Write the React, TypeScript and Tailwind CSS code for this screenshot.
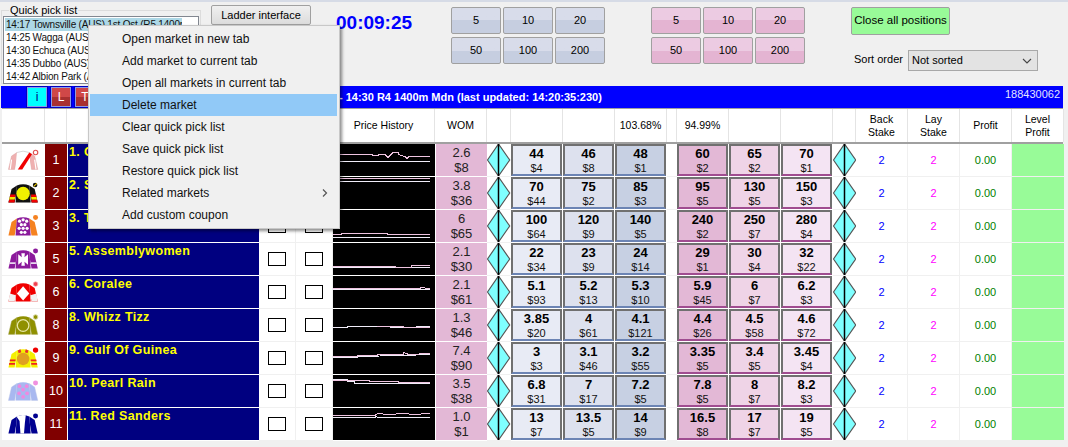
import { ReactNode } from 'react';

const FONT = "font-['Liberation_Sans',Arial,sans-serif]";

const GRID =
  'grid grid-cols-[43px_22px_192px_37px_37px_102px_52px_24px_52px_52px_52px_10px_52px_52px_52px_23px_52px_52px_52px_52px]';

type Price = [string, string];

interface Runner {
  no: number;
  name: string;
  wom: [string, string];
  back: Price[];
  lay: Price[];
  lines: [string, string];
}

const runners: Runner[] = [
  {
    no: 1,
    name: '1. Cosmic',
    wom: ['2.6', '$8'],
    back: [['44', '$4'], ['46', '$8'], ['48', '$1']],
    lay: [['60', '$2'], ['65', '$2'], ['70', '$1']],
    lines: ['7,10 39,10 39,11 45,11 45,10 52,10 55,13 60,8 65,8 65,10 72,12 74,14 76,12 97,12', '7,17 97,17'],
  },
  {
    no: 2,
    name: '2. Starlet',
    wom: ['3.8', '$36'],
    back: [['70', '$44'], ['75', '$2'], ['85', '$3']],
    lay: [['95', '$5'], ['130', '$5'], ['150', '$3']],
    lines: ['0,1 97,1', '0,4 97,4'],
  },
  {
    no: 3,
    name: '3. Tiara',
    wom: ['6', '$65'],
    back: [['100', '$64'], ['120', '$9'], ['140', '$5']],
    lay: [['240', '$2'], ['250', '$7'], ['280', '$4']],
    lines: ['0,24 8,24 8,23 54,23 54,24 97,24', '0,27 97,27'],
  },
  {
    no: 5,
    name: '5. Assemblywomen',
    wom: ['2.1', '$30'],
    back: [['22', '$34'], ['23', '$9'], ['24', '$14']],
    lay: [['29', '$1'], ['30', '$4'], ['32', '$22']],
    lines: ['0,23 62,23 62,24 78,24 78,22 97,22', '0,24 97,24'],
  },
  {
    no: 6,
    name: '6. Coralee',
    wom: ['2.1', '$61'],
    back: [['5.1', '$93'], ['5.2', '$13'], ['5.3', '$10']],
    lay: [['5.9', '$45'], ['6', '$7'], ['6.2', '$3']],
    lines: ['0,12 85,12 90,11 94,12 97,12', '0,13 97,13'],
  },
  {
    no: 8,
    name: '8. Whizz Tizz',
    wom: ['1.3', '$46'],
    back: [['3.85', '$20'], ['4', '$61'], ['4.1', '$121']],
    lay: [['4.4', '$26'], ['4.5', '$58'], ['4.6', '$72']],
    lines: ['44,17 70,17 70,18 97,18', '0,18 14,18 14,17 44,17 70,18 97,17'],
  },
  {
    no: 9,
    name: '9. Gulf Of Guinea',
    wom: ['7.4', '$90'],
    back: [['3', '$3'], ['3.1', '$46'], ['3.2', '$55']],
    lay: [['3.35', '$5'], ['3.4', '$5'], ['3.45', '$4']],
    lines: ['0,14 24,14 24,13 44,13 44,12 70,12 71,10 73,11 76,12 97,11', '0,15 24,15 24,14 70,13 97,12'],
  },
  {
    no: 10,
    name: '10. Pearl Rain',
    wom: ['3.5', '$38'],
    back: [['6.8', '$31'], ['7', '$17'], ['7.2', '$5']],
    lay: [['7.8', '$5'], ['8', '$7'], ['8.2', '$3']],
    lines: ['0,5 36,5 36,6 65,6 65,7 97,7', '0,4 14,4 14,6 21,6 21,8 97,8'],
  },
  {
    no: 11,
    name: '11. Red Sanders',
    wom: ['1.0', '$1'],
    back: [['13', '$7'], ['13.5', '$5'], ['14', '$9']],
    lay: [['16.5', '$8'], ['17', '$7'], ['19', '$5']],
    lines: ['0,7 42,7 42,6 46,5 54,6 72,5 80,6 97,5', '0,9 42,9 42,8 46,9 97,9'],
  },
];

const quickPicks = [
  '14:17 Townsville (AUS) 1st Ost (R5 1400m',
  '14:25 Wagga (AUS) R3',
  '14:30 Echuca (AUS) R4',
  '14:35 Dubbo (AUS) R2',
  '14:42 Albion Park (AUS) R1',
];

const menuItems = [
  'Open market in new tab',
  'Add market to current tab',
  'Open all markets in current tab',
  'Delete market',
  'Clear quick pick list',
  'Save quick pick list',
  'Restore quick pick list',
  'Related markets',
  'Add custom coupon',
];

const stakes = ['5', '10', '20', '50', '100', '200'];

const backShades = ['bg-[#e8ebf5]', 'bg-[#dde1ee]', 'bg-[#c7d0e3]'];
const layShades = ['bg-[#e3b8d6]', 'bg-[#efd4e7]', 'bg-[#f4e4f3]'];

// shoulders and arms of a racing jacket, viewBox 36x28
function Jacket({ body, sleeve, line = 'none' }: { body: string; sleeve: string; line?: string }) {
  return (
    <>
      <path d="M10 5 L4 9 L0.5 24 L7.5 24 L9.5 13 Z" fill={sleeve} stroke={line} strokeWidth="0.5" />
      <path d="M24 5 L30 9 L33.5 24 L26.5 24 L24.5 13 Z" fill={sleeve} stroke={line} strokeWidth="0.5" />
      <path d="M10 5 Q17 2 24 5 L25.5 24 H8.5 Z" fill={body} />
    </>
  );
}

function Silk({ no }: { no: number }) {
  let art: ReactNode = null;
  if (no === 1) {
    art = (
      <>
        <Jacket body="#ffffff" sleeve="#efb0b0" line="#d8a0a0" />
        <path d="M10 5 Q17 2 24 5" fill="none" stroke="#c8c8c8" strokeWidth="0.8" />
        <path d="M4 13 L2.5 24 M30 13 L31.5 24" stroke="#fff" strokeWidth="1.3" />
        <path d="M11 24 L24 5 L27 7 L16 24 Z" fill="#f00000" />
        <circle cx="31" cy="5" r="2.5" fill="#fff" stroke="#e05050" strokeWidth="1.3" />
      </>
    );
  } else if (no === 2) {
    art = (
      <>
        <Jacket body="#111111" sleeve="#111111" />
        <path d="M2.6 15 H8.6 L8 18 H2 Z M26 15 H31.5 L32 18 H26 Z" fill="#f00000" />
        <path d="M2 18 H8 L7.6 21 H1.2 Z M26 18 H32 L32.8 21 H26.4 Z" fill="#f8e800" />
        <path d="M1.2 21 H7.6 L7.5 24 H0.5 Z M26.4 21 H32.8 L33.5 24 H26.5 Z" fill="#f00000" />
        <circle cx="17" cy="14" r="7.5" fill="#f0f000" />
        <circle cx="30.5" cy="4.5" r="2.6" fill="#111" />
        <path d="M29 6 L32.5 2.5" stroke="#e8c800" strokeWidth="1.2" />
      </>
    );
  } else if (no === 3) {
    art = (
      <>
        <Jacket body="#8b1a9b" sleeve="#f58220" />
        {[[13, 8], [17, 6.5], [21, 8], [15, 12], [19, 12], [12.5, 16], [17, 16], [21.5, 16], [15, 20.5], [19, 20.5]].map(([x, y]) => (
          <circle key={`${x}-${y}`} cx={x} cy={y} r="1.8" fill="#fff" />
        ))}
        <circle cx="31" cy="4" r="2.8" fill="#f58220" />
      </>
    );
  } else if (no === 5) {
    art = (
      <>
        <Jacket body="#8b1a9b" sleeve="#8b1a9b" />
        <path d="M2 17 H8.4 L8 19 H1.6 Z M26 17 H32 L32.5 19 H25.6 Z" fill="#e8d8f0" />
        <path d="M11.5 8 L15.5 11.5 L15 7 H19 L18.5 11.5 L22.5 8 V20 L18.5 16.5 L19 21 H15 L15.5 16.5 L11.5 20 Z" fill="#fff" />
        <circle cx="31" cy="4.5" r="2.8" fill="#8b1a9b" />
      </>
    );
  } else if (no === 6) {
    art = (
      <>
        <Jacket body="#f00000" sleeve="#f00000" />
        <path d="M2 15 L0.5 24 H7.5 L8.8 17 Z M32 15 L33.5 24 H26.5 L25.2 17 Z" fill="#f2f2f2" />
        <path d="M17 7 L24 15 L17 23 L10 15 Z" fill="#fff" />
        <circle cx="31" cy="4.5" r="2.6" fill="#f04050" stroke="#f8b0b0" strokeWidth="0.8" />
      </>
    );
  } else if (no === 8) {
    art = (
      <>
        <Jacket body="#8f9000" sleeve="#8f9000" line="#b0b070" />
        <circle cx="17" cy="14" r="6.5" fill="none" stroke="#e8e8a8" strokeWidth="1.4" />
        <circle cx="31" cy="4.5" r="2.6" fill="#8f9000" stroke="#d8d8a0" strokeWidth="1.1" />
      </>
    );
  } else if (no === 9) {
    art = (
      <>
        <Jacket body="#f4f000" sleeve="#f4f000" />
        <path d="M11 5 L14 3.6 L15 7 L12 8 Z M23 5 L20 3.6 L19 7 L22 8 Z" fill="#e83030" />
        <path d="M2.2 15 H8.6 L8.3 17 H1.8 Z M1.4 19 H8 L7.7 21 H1 Z M25.4 15 H31.8 L32.2 17 H25.7 Z M26 19 H32.6 L33 21 H26.3 Z" fill="#ee2020" />
        <circle cx="17" cy="14.5" r="7" fill="#dfa020" />
        <circle cx="31" cy="4.5" r="3" fill="#f00000" />
      </>
    );
  } else if (no === 10) {
    art = (
      <>
        <Jacket body="#a8b8f0" sleeve="#a8b8f0" line="#c0c8e8" />
        {[[13, 8], [21, 8], [17, 12], [12.5, 16], [21.5, 16], [17, 20]].map(([x, y]) => (
          <circle key={`${x}-${y}`} cx={x} cy={y} r="2.1" fill="#f088e0" />
        ))}
        <circle cx="31" cy="4.5" r="2.8" fill="#f090e0" />
      </>
    );
  } else if (no === 11) {
    art = (
      <>
        <Jacket body="#000090" sleeve="#000090" />
        <path d="M9.5 5 Q14 2.5 20 3.5 L19 12 L18 24 H14 L13 10 Z" fill="#fff" />
        <circle cx="31" cy="4.5" r="2.8" fill="#000090" />
      </>
    );
  }
  return (
    <svg width="32" height="25" viewBox="0 0 36 28" className="block">
      {art}
    </svg>
  );
}

function Diamond() {
  return (
    <div className="h-full bg-white border-b border-[#f0f0f0]">
      <svg width="24" height="32" viewBox="0 0 24 32" className="block">
        <path d="M11.5 0 L22.7 16 L11.5 32 L0.5 16 Z" fill="#7fffff" stroke="#555" strokeWidth="1.2" />
        <path d="M11.5 0 V32" stroke="#000" strokeWidth="1.5" />
      </svg>
    </div>
  );
}

function PriceCell({ price, shade, lay }: { price: Price; shade: string; lay?: boolean }) {
  return (
    <div className="h-[33px] bg-white pr-[1px] pb-[1px]">
      <div
        className={`h-[32px] flex flex-col items-center border-2 border-[#707070] ${
          lay ? 'border-b-[#a04c90]' : 'border-b-[#6c84b4]'
        } ${shade} text-black`}
      >
        <div className="text-[13px] font-bold leading-[15px] h-[16px] whitespace-nowrap">{price[0]}</div>
        <div className="text-[11px] leading-[12px] text-[#111] whitespace-nowrap">{price[1]}</div>
      </div>
    </div>
  );
}

function StakeButtons({ face }: { face: string }) {
  return (
    <div className="grid grid-cols-[50px_50px_50px] gap-x-[2px] gap-y-[3px]">
      {stakes.map((s) => (
        <div
          key={s}
          className={`h-[27px] border border-[#a0a0a0] rounded-[2px] flex items-center justify-center text-[11px] text-black ${face}`}
        >
          {s}
        </div>
      ))}
    </div>
  );
}

function HeaderCell({ children }: { children?: ReactNode }) {
  return (
    <div className="bg-white border-r border-[#e4e4e4] flex items-center justify-center text-center text-[10.5px] leading-[13px] text-black">
      {children}
    </div>
  );
}

function ContextMenu() {
  return (
    <div className="absolute left-[88px] top-[23px] w-[252px] h-[204px] bg-[#f0f0f0] border border-[#c8c8c8] shadow-[2px_2px_3px_rgba(0,0,0,0.45)] pt-[2px] pl-[1px] pr-[2px]">
      {menuItems.map((item) => (
        <div
          key={item}
          className={`h-[22px] pl-[32px] pr-[8px] flex items-center justify-between text-[12px] text-[#111] ${
            item === 'Delete market' ? 'bg-[#91c9f7]' : ''
          }`}
        >
          <span>{item}</span>
          {item === 'Related markets' && (
            <svg width="6" height="8" viewBox="0 0 6 8" className="block mr-[1px]">
              <path d="M1 0.5 L4.5 4 L1 7.5" fill="none" stroke="#555" strokeWidth="1.2" />
            </svg>
          )}
        </div>
      ))}
    </div>
  );
}

function TopBar() {
  return (
    <div className="h-[84px] flex items-start">
      <fieldset className="ml-[1px] w-[200px] h-[80px] mt-[2px] border border-[#dcdcdc] pl-[1px] pr-[1px] pb-0 relative">
        <legend className="ml-[6px] px-[1px] text-[11px] leading-[12px] text-black">Quick pick list</legend>
        <div className="h-[68px] border border-[#828790] bg-white p-[1px] overflow-hidden text-[10px] leading-[13px] tracking-[-0.2px] text-[#111]">
          {quickPicks.map((q, i) => (
            <div key={q} className={`h-[13px] w-[177px] pl-[1px] whitespace-nowrap overflow-hidden ${i === 0 ? 'bg-[#add8e6]' : ''}`}>
              {q}
            </div>
          ))}
        </div>
      </fieldset>
      <div className="ml-[10px] mt-[3px] w-[100px] h-[20px] border border-[#a0a0a0] rounded-[2px] bg-linear-to-b from-[#f0f0f0] to-[#dcdcdc] flex items-center justify-center text-[11px] text-black">
        Ladder interface
      </div>
      <div className="ml-[25px] mt-[8px] w-[115px] text-[19px] leading-[25px] font-bold text-[#0000ff]">00:09:25</div>
      <div className="mt-[5px]">
        <StakeButtons face="bg-linear-to-b from-[#d8dcea] from-50% to-[#c6cee0] to-50%" />
      </div>
      <div className="ml-[46px] mt-[5px]">
        <StakeButtons face="bg-linear-to-b from-[#eccbe2] from-50% to-[#e4b4d2] to-50%" />
      </div>
      <div className="ml-[46px] mt-[5px] flex flex-col">
        <div className="w-[99px] h-[28px] border border-[#a0a0a0] rounded-[2px] bg-[#98fb98] flex items-center justify-center text-[11.5px] text-black">
          Close all positions
        </div>
        <div className="mt-[15px] flex items-center">
          <span className="w-[54px] ml-[3px] text-[11px] leading-[14px] text-black mt-[-4px] whitespace-nowrap">Sort order</span>
          <div className="w-[130px] h-[21px] border border-[#a8a8a8] bg-[#e3e3e3] flex items-center justify-between pl-[3px] pr-[5px] text-[11px] text-black">
            <span>Not sorted</span>
            <svg width="10" height="6" viewBox="0 0 10 6" className="block">
              <path d="M1 1 L5 5 L9 1" fill="none" stroke="#444" strokeWidth="1.1" />
            </svg>
          </div>
        </div>
      </div>
    </div>
  );
}

function MarketBar() {
  const flagButton = (label: string, face: string, text: string) => (
    <div className={`w-[20px] h-[20px] border border-[#8a9ae8] outline outline-1 outline-[#0000c0] flex items-center justify-center text-[12px] ${face} ${text}`}>
      {label}
    </div>
  );
  return (
    <div className="ml-[1px] w-[1062px] h-[22px] bg-[#0000ff] flex items-start text-white">
      <div className="ml-[26px] mt-[1px] flex gap-[4px]">
        {flagButton('i', 'bg-[#00ffff]', 'text-[#000080]')}
        {flagButton('L', 'bg-linear-to-b from-[#d04848] from-50% to-[#a83030] to-50%', 'text-white')}
        {flagButton('T', 'bg-linear-to-b from-[#d04848] from-50% to-[#a83030] to-50%', 'text-white')}
      </div>
      <div className="ml-[244px] mt-[4px] text-[11px] leading-[14px] font-bold whitespace-nowrap">
        - 14:30 R4 1400m Mdn (last updated: 14:20:35:230)
      </div>
      <div className="ml-auto mr-[3px] mt-[2px] text-[11px] leading-[13px] text-[#e4e4ff]">188430062</div>
    </div>
  );
}

function RunnerRow({ runner }: { runner: Runner }) {
  return (
    <div className={`${GRID} h-[33px]`}>
      <div className="bg-white border-b border-[#f0f0f0] flex items-center justify-center">
        <Silk no={runner.no} />
      </div>
      <div className="bg-[#800000] border-b border-white flex items-center justify-center text-[12.5px] text-white">
        {runner.no}
      </div>
      <div className="bg-[#000080] border-b border-l border-white text-[#ffff00] text-[12.5px] leading-[15px] font-bold pl-[1px] pt-[1px] tracking-[0.35px] whitespace-nowrap overflow-hidden">
        {runner.name}
      </div>
      {[0, 1].map((k) => (
        <div key={k} className="bg-white border-b border-r border-[#f0f0f0] flex items-center justify-center">
          <div className="w-[18px] h-[14px] border border-black" />
        </div>
      ))}
      <div className="bg-black border-b border-white">
        <svg width="102" height="32" viewBox="0 0 102 32" className="block" shapeRendering="crispEdges">
          <polyline points={runner.lines[1]} fill="none" stroke="#f0ecf8" strokeWidth="1" transform="translate(0 0.5)" />
          <polyline points={runner.lines[0]} fill="none" stroke="#eec4e0" strokeWidth="1" transform="translate(0 0.5)" />
        </svg>
      </div>
      <div className="bg-[#e3b8d6] border-l border-b border-white flex flex-col items-center justify-center text-[13px] leading-[15px] text-[#222]">
        <span>{runner.wom[0]}</span>
        <span>{runner.wom[1]}</span>
      </div>
      <Diamond />
      {runner.back.map((p, i) => (
        <PriceCell key={i} price={p} shade={backShades[i]} />
      ))}
      <div className="bg-white border-b border-[#f0f0f0]" />
      {runner.lay.map((p, i) => (
        <PriceCell key={i} price={p} shade={layShades[i]} lay />
      ))}
      <Diamond />
      <div className="bg-white border-b border-r border-[#f0f0f0] flex items-center justify-center text-[11px] text-[#0000ff]">2</div>
      <div className="bg-white border-b border-r border-[#f0f0f0] flex items-center justify-center text-[11px] text-[#ff00ff]">2</div>
      <div className="bg-white border-b border-r border-[#f0f0f0] flex items-center justify-center text-[11px] text-[#008000]">0.00</div>
      <div className="bg-[#98fb98] border-b border-[#f0f0f0]" />
    </div>
  );
}

export default function App() {
  return (
    <div className={`relative w-[1068px] h-[447px] overflow-hidden bg-[#f0f0f0] border-t-2 border-[#d6dbe6] ${FONT}`}>
      <TopBar />
      <MarketBar />
      <div className="ml-[2px] w-[1061px]">
        <div className={`${GRID} h-[36px] border-t border-[#a0a0a0] border-b-2 border-b-[#a0a0a0]`}>
          <HeaderCell />
          <HeaderCell />
          <HeaderCell />
          <HeaderCell />
          <HeaderCell />
          <HeaderCell>Price History</HeaderCell>
          <HeaderCell>WOM</HeaderCell>
          <HeaderCell />
          <HeaderCell />
          <HeaderCell />
          <HeaderCell>103.68%</HeaderCell>
          <HeaderCell />
          <HeaderCell>94.99%</HeaderCell>
          <HeaderCell />
          <HeaderCell />
          <HeaderCell />
          <HeaderCell>
            Back
            <br />
            Stake
          </HeaderCell>
          <HeaderCell>
            Lay
            <br />
            Stake
          </HeaderCell>
          <HeaderCell>Profit</HeaderCell>
          <HeaderCell>
            Level
            <br />
            Profit
          </HeaderCell>
        </div>
        {runners.map((r) => (
          <RunnerRow key={r.no} runner={r} />
        ))}
      </div>
      <ContextMenu />
    </div>
  );
}
